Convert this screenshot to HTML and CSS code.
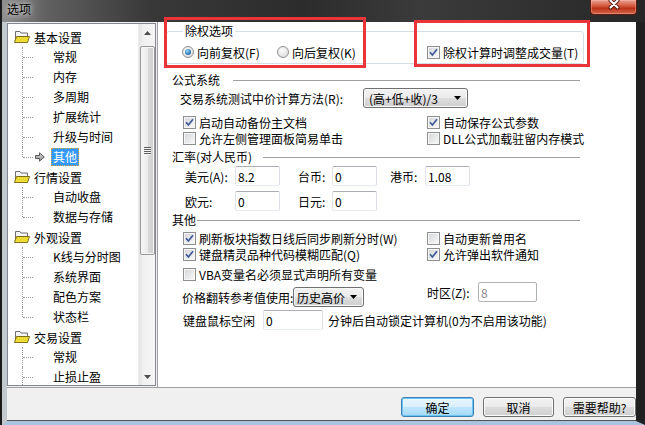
FILE: index.html
```html
<!DOCTYPE html>
<html lang="zh-CN">
<head>
    <meta charset="UTF-8">
    <meta name="viewport" content="width=device-width, initial-scale=1.0">
    <title>选项</title>
    <link rel="stylesheet" href="styles.css">
</head>
<body>
<div class="window">
    <div class="titlebar">
        <span class="title">选项</span>
        <span class="close-btn">
            <svg width="14" height="11" viewBox="0 0 14 11">
                <path d="M3.5 1.5 L10.5 8.5 M10.5 1.5 L3.5 8.5" stroke="#5a1a10" stroke-width="4" stroke-linecap="round"/>
                <path d="M3.5 1.5 L10.5 8.5 M10.5 1.5 L3.5 8.5" stroke="#fff" stroke-width="2" stroke-linecap="round"/>
            </svg>
        </span>
    </div>

    <div class="frame">
        <div class="client">
            <!-- left tree -->
            <div class="tree">
                <ul class="tree-list">
                    <li class="tree-node">
                        <div class="node-label">
                            <svg class="folder" width="16" height="14" viewBox="0 0 16 14">
                                <path d="M1.5 1.5 H6 L7 3 H13.5 V11.5 H1.5 Z" fill="#f4f4f4" stroke="#6f6f6f"/>
                                <path d="M0.5 12.5 L2.5 6.5 H15.5 L13.5 12.5 Z" fill="#f3e33a" stroke="#7d6d1a"/>
                                <path d="M3 8 H14 M2.5 10 H13.5" stroke="#d8c020" stroke-dasharray="1 1"/>
                            </svg>基本设置
                        </div>
                        <ul class="tree-children">
                            <li>常规</li>
                            <li>内存</li>
                            <li>多周期</li>
                            <li>扩展统计</li>
                            <li>升级与时间</li>
                            <li class="selected">
                                <svg class="arrow-icon" width="10" height="10" viewBox="0 0 10 10">
                                    <defs>
                                        <linearGradient id="arw" x1="0" y1="0" x2="0" y2="1">
                                            <stop offset="0" stop-color="#e0e0e0"/>
                                            <stop offset="1" stop-color="#8a8a8a"/>
                                        </linearGradient>
                                    </defs>
                                    <path d="M0.5 3.5 H4.5 V0.8 L9.3 5 L4.5 9.2 V6.5 H0.5 Z" fill="url(#arw)" stroke="#5a5a5a"/>
                                </svg><span class="sel-text">其他</span>
                            </li>
                        </ul>
                    </li>
                    <li class="tree-node">
                        <div class="node-label">
                            <svg class="folder" width="16" height="14" viewBox="0 0 16 14">
                                <path d="M1.5 1.5 H6 L7 3 H13.5 V11.5 H1.5 Z" fill="#f4f4f4" stroke="#6f6f6f"/>
                                <path d="M0.5 12.5 L2.5 6.5 H15.5 L13.5 12.5 Z" fill="#f3e33a" stroke="#7d6d1a"/>
                                <path d="M3 8 H14 M2.5 10 H13.5" stroke="#d8c020" stroke-dasharray="1 1"/>
                            </svg>行情设置
                        </div>
                        <ul class="tree-children">
                            <li>自动收盘</li>
                            <li>数据与存储</li>
                        </ul>
                    </li>
                    <li class="tree-node">
                        <div class="node-label">
                            <svg class="folder" width="16" height="14" viewBox="0 0 16 14">
                                <path d="M1.5 1.5 H6 L7 3 H13.5 V11.5 H1.5 Z" fill="#f4f4f4" stroke="#6f6f6f"/>
                                <path d="M0.5 12.5 L2.5 6.5 H15.5 L13.5 12.5 Z" fill="#f3e33a" stroke="#7d6d1a"/>
                                <path d="M3 8 H14 M2.5 10 H13.5" stroke="#d8c020" stroke-dasharray="1 1"/>
                            </svg>外观设置
                        </div>
                        <ul class="tree-children">
                            <li>K线与分时图</li>
                            <li>系统界面</li>
                            <li>配色方案</li>
                            <li>状态栏</li>
                        </ul>
                    </li>
                    <li class="tree-node">
                        <div class="node-label">
                            <svg class="folder" width="16" height="14" viewBox="0 0 16 14">
                                <path d="M1.5 1.5 H6 L7 3 H13.5 V11.5 H1.5 Z" fill="#f4f4f4" stroke="#6f6f6f"/>
                                <path d="M0.5 12.5 L2.5 6.5 H15.5 L13.5 12.5 Z" fill="#f3e33a" stroke="#7d6d1a"/>
                                <path d="M3 8 H14 M2.5 10 H13.5" stroke="#d8c020" stroke-dasharray="1 1"/>
                            </svg>交易设置
                        </div>
                        <ul class="tree-children more">
                            <li>常规</li>
                            <li>止损止盈</li>
                        </ul>
                    </li>
                </ul>
                <div class="scrollbar">
                    <div class="sb-btn">
                        <svg width="7" height="4" viewBox="0 0 7 4"><path d="M0 4 L3.5 0 L7 4 Z" fill="#4d4d4d"/></svg>
                    </div>
                    <div class="sb-thumb"><span class="grip"></span></div>
                    <div class="sb-space"></div>
                    <div class="sb-btn">
                        <svg width="7" height="4" viewBox="0 0 7 4"><path d="M0 0 L7 0 L3.5 4 Z" fill="#4d4d4d"/></svg>
                    </div>
                </div>
            </div>

            <!-- right settings panel -->
            <div class="panel">
                <fieldset class="group">
                    <legend>除权选项</legend>
                    <div class="group-row">
                        <label class="radio-item radio-first"><span class="radio checked"></span>向前复权(F)</label>
                        <label class="radio-item radio-second"><span class="radio"></span>向后复权(K)</label>
                        <label class="check-item"><span class="check checked">
                            <svg width="9" height="9" viewBox="0 0 9 9"><path d="M1 4.2 L3.4 7 L8 1.2" fill="none" stroke="#3f5a97" stroke-width="1.7"/></svg>
                        </span>除权计算时调整成交量(T)</label>
                    </div>
                </fieldset>

                <div class="section-title">
                    <span class="section-name name-formula">公式系统</span><span class="section-line"></span>
                </div>
                <div class="calc-row">
                    <span class="calc-label">交易系统测试中价计算方法(R):</span>
                    <span class="combo combo-calc">(高+低+收)/3<span class="combo-arrow"><svg width="7" height="4" viewBox="0 0 7 4"><path d="M0 0 L7 0 L3.5 4 Z" fill="#000"/></svg></span></span>
                </div>
                <div class="check-grid">
                    <label class="check-item"><span class="check checked">
                        <svg width="9" height="9" viewBox="0 0 9 9"><path d="M1 4.2 L3.4 7 L8 1.2" fill="none" stroke="#3f5a97" stroke-width="1.7"/></svg>
                    </span>启动自动备份主文档</label>
                    <label class="check-item"><span class="check checked">
                        <svg width="9" height="9" viewBox="0 0 9 9"><path d="M1 4.2 L3.4 7 L8 1.2" fill="none" stroke="#3f5a97" stroke-width="1.7"/></svg>
                    </span>自动保存公式参数</label>
                    <label class="check-item"><span class="check"></span>允许左侧管理面板简易单击</label>
                    <label class="check-item"><span class="check"></span>DLL公式加载驻留内存模式</label>
                </div>

                <div class="section-title">
                    <span class="section-name name-rate">汇率(对人民币)</span><span class="section-line"></span>
                </div>
                <div class="rate-grid">
                    <span class="rate-label">美元(A):</span>
                    <input class="textbox" type="text" value="8.2">
                    <span class="rate-label">台币:</span>
                    <input class="textbox" type="text" value="0">
                    <span class="rate-label">港币:</span>
                    <input class="textbox" type="text" value="1.08">
                    <span class="rate-label">欧元:</span>
                    <input class="textbox" type="text" value="0">
                    <span class="rate-label">日元:</span>
                    <input class="textbox" type="text" value="0">
                </div>

                <div class="section-title">
                    <span class="section-name name-other">其他</span><span class="section-line"></span>
                </div>
                <div class="check-grid other-grid">
                    <label class="check-item"><span class="check checked">
                        <svg width="9" height="9" viewBox="0 0 9 9"><path d="M1 4.2 L3.4 7 L8 1.2" fill="none" stroke="#3f5a97" stroke-width="1.7"/></svg>
                    </span>刷新板块指数日线后同步刷新分时(W)</label>
                    <label class="check-item"><span class="check"></span>自动更新曾用名</label>
                    <label class="check-item"><span class="check checked">
                        <svg width="9" height="9" viewBox="0 0 9 9"><path d="M1 4.2 L3.4 7 L8 1.2" fill="none" stroke="#3f5a97" stroke-width="1.7"/></svg>
                    </span>键盘精灵品种代码模糊匹配(Q)</label>
                    <label class="check-item"><span class="check checked">
                        <svg width="9" height="9" viewBox="0 0 9 9"><path d="M1 4.2 L3.4 7 L8 1.2" fill="none" stroke="#3f5a97" stroke-width="1.7"/></svg>
                    </span>允许弹出软件通知</label>
                    <label class="check-item"><span class="check"></span>VBA变量名必须显式声明所有变量</label>
                </div>

                <div class="price-row">
                    <div class="price-left">
                        <span class="price-label">价格翻转参考值使用:</span>
                        <span class="combo combo-price">历史高价<span class="combo-arrow"><svg width="7" height="4" viewBox="0 0 7 4"><path d="M0 0 L7 0 L3.5 4 Z" fill="#000"/></svg></span></span>
                    </div>
                    <div class="price-right">
                        <span class="zone-label">时区(Z):</span>
                        <input class="textbox zone-input" type="text" value="8" disabled>
                    </div>
                </div>

                <div class="idle-row">
                    <span class="idle-label">键盘鼠标空闲</span>
                    <input class="textbox idle-input" type="text" value="0">
                    <span class="idle-text">分钟后自动锁定计算机(0为不启用该功能)</span>
                </div>
            </div>
        </div>

        <div class="footer">
            <button class="btn btn-default">确定</button>
            <button class="btn btn-cancel">取消</button>
            <button class="btn">需要帮助?</button>
        </div>
    </div>

    <!-- red highlight marks drawn over the dialog -->
    <div class="mark mark-adjust"></div>
    <div class="mark mark-volume"></div>
</div>
</body>
</html>
```

FILE: styles.css
```css
* {
    box-sizing: border-box;
}
body {
    margin: 0;
    background: #111;
    font-family: "Noto Sans CJK SC", "Noto Sans", sans-serif;
    font-size: 12px;
    color: #000;
}
ul {
    list-style: none;
    margin: 0;
    padding: 0;
}
.window {
    position: relative;
    width: 645px;
    height: 425px;
    display: flex;
    flex-direction: column;
    overflow: hidden;
    border-left: 2px solid #1a1a1a;
    background: #2a2a2a;
}

/* title bar */
.titlebar {
    height: 22px;
    flex: none;
    display: flex;
    justify-content: space-between;
    align-items: flex-start;
    background: linear-gradient(to right, #8e8e8e 0, #606060 45px, #383838 150px, #2c2c2c 300px, #3b3b3b 420px, #272727 100%);
}
.title {
    margin: 2px 0 0 5px;
    line-height: 14px;
    text-shadow: 0 0 5px #e0e0e0, 0 0 9px #c8c8c8;
}
.close-btn {
    width: 47px;
    height: 15px;
    margin-right: 8px;
    display: flex;
    justify-content: center;
    align-items: flex-start;
    border: 1px solid #5a1a10;
    border-top: none;
    border-radius: 0 0 4px 4px;
    background: linear-gradient(#eaa392, #d65c42 40%, #bb3219 60%, #d4684a);
    box-shadow: inset 0 0 0 1px rgba(255, 200, 190, 0.35);
}
.close-btn svg {
    display: block;
    margin-top: -1px;
}

/* window body frame */
.frame {
    flex: 1;
    display: flex;
    flex-direction: column;
    border-style: solid;
    border-width: 0 9px 4px 5px;
    border-color: #202020 #202020 #a9c4de #c3c8cd;
    background: #f0f0f0;
}
.client {
    height: 365px;
    flex: none;
    display: flex;
}

/* tree */
.tree {
    width: 149px;
    height: 363px;
    margin-top: 1px;
    display: flex;
    border: 1px solid #828790;
    background: #fff;
}
.tree-list {
    flex: 1;
    padding-top: 3px;
    overflow: hidden;
}
.node-label {
    height: 20px;
    display: flex;
    align-items: center;
    padding-left: 6px;
}
.folder {
    display: block;
    margin-right: 4px;
}
.tree-children li {
    position: relative;
    height: 20px;
    line-height: 20px;
    padding-left: 45px;
    white-space: nowrap;
}
.tree-children li::before {
    content: "";
    position: absolute;
    left: 14px;
    top: 0;
    bottom: 0;
    border-left: 1px dotted #9a9a9a;
}
.tree-children li:last-child::before {
    bottom: 10px;
}
.tree-children.more li:last-child::before {
    bottom: 0;
}
.tree-children li::after {
    content: "";
    position: absolute;
    left: 15px;
    top: 10px;
    width: 10px;
    border-top: 1px dotted #9a9a9a;
}
.tree-children li.selected {
    display: flex;
    align-items: center;
    padding-left: 27px;
}
.arrow-icon {
    display: block;
}
.sel-text {
    margin-left: 6px;
    padding: 0 2px;
    line-height: 18px;
    background: #3399ff;
    color: #fff;
    outline: 1px dotted #d9a441;
    outline-offset: -1px;
}

/* scrollbar */
.scrollbar {
    width: 17px;
    flex: none;
    display: flex;
    flex-direction: column;
    align-items: center;
    border-left: 1px solid #ececec;
    background: linear-gradient(to right, #e4e4e4, #f1f1f1 4px, #f5f5f5);
}
.sb-btn {
    width: 100%;
    height: 17px;
    display: flex;
    align-items: center;
    justify-content: center;
}
.sb-btn svg {
    display: block;
}
.sb-thumb {
    width: 15px;
    height: 209px;
    margin-top: 5px;
    display: flex;
    align-items: center;
    justify-content: center;
    border: 1px solid #979797;
    border-radius: 2px;
    background: linear-gradient(to right, #f5f5f5, #ebebeb 50%, #dadada 51%, #cfcfcf);
    box-shadow: inset 0 0 0 1px #f8f8f8;
}
.grip {
    width: 7px;
    height: 8px;
    background: repeating-linear-gradient(#5f5f5f 0 1px, #f4f4f4 1px 2px);
}
.sb-space {
    flex: 1;
}

/* right panel */
.panel {
    flex: 1;
    margin-left: 1px;
    border-left: 1px solid #a0a0a0;
    background: #fff;
}
.group {
    width: 418px;
    margin: 2px 0 0 8px;
    padding: 6px 0 3px 15px;
    border: 1px solid #d5dfe5;
    border-radius: 3px;
}
.group legend {
    margin-left: 1px;
    padding: 0 2px;
    line-height: 14px;
}
.group-row {
    height: 16px;
    display: flex;
    align-items: center;
}
.radio-item,
.check-item {
    display: flex;
    align-items: center;
    white-space: nowrap;
}
.radio-first {
    width: 95px;
}
.radio-second {
    width: 150px;
}
.radio {
    width: 12px;
    height: 12px;
    margin-right: 3px;
    display: flex;
    align-items: center;
    justify-content: center;
    border: 1px solid #8e8f8f;
    border-radius: 50%;
    background: radial-gradient(circle at 40% 35%, #fbfbfb, #e6e6e6 60%, #cfcfcf);
}
.radio.checked::after {
    content: "";
    width: 6px;
    height: 6px;
    border-radius: 50%;
    background: radial-gradient(circle at 40% 35%, #9ad8f8, #2a78b8 60%, #1a4f86);
}
.check {
    width: 13px;
    height: 13px;
    margin-right: 3px;
    display: flex;
    align-items: center;
    justify-content: center;
    border: 1px solid #8e8f8f;
    background: linear-gradient(135deg, #d2d4d8, #f3f3f3 80%);
    box-shadow: inset 0 0 0 1px #f6f6f6;
}
.check svg {
    display: block;
}

.section-title {
    height: 14px;
    display: flex;
    align-items: center;
    margin: 9px 56px 0 14px;
    line-height: 14px;
}
.section-name {
    white-space: nowrap;
}
.name-formula {
    width: 61px;
}
.name-rate {
    width: 91px;
}
.name-other {
    width: 25px;
}
.section-line {
    flex: 1;
    height: 1px;
    background: #a0a0a0;
}

.calc-row {
    height: 20px;
    margin-top: 1px;
    padding-left: 22px;
    display: flex;
    align-items: center;
}
.calc-label {
    width: 183px;
    white-space: nowrap;
}
.combo {
    position: relative;
    height: 20px;
    display: flex;
    align-items: center;
    padding-left: 5px;
    border: 1px solid #707070;
    border-radius: 3px;
    background: linear-gradient(#f2f2f2, #ebebeb 50%, #dddddd 51%, #cfcfcf);
    box-shadow: inset 0 0 0 1px #fafafa;
    white-space: nowrap;
}
.combo-calc {
    width: 105px;
}
.combo-price {
    width: 71px;
    padding-left: 3px;
}
.combo-arrow {
    margin-left: auto;
    margin-right: 6px;
}
.combo-arrow svg {
    display: block;
}

.check-grid {
    display: grid;
    grid-template-columns: 244px auto;
    grid-auto-rows: 16px;
    align-items: center;
    margin-top: 6px;
    padding-left: 25px;
}
.other-grid {
    grid-template-rows: 16px 16px 20px;
    align-items: end;
    margin-top: 3px;
}
.other-grid .check-item {
    height: 16px;
}
.check-grid + .section-title {
    margin-top: 4px;
}

.rate-grid {
    display: grid;
    grid-template-columns: 50px 45px 52px 45px 48px 45px;
    grid-auto-rows: 20px;
    row-gap: 5px;
    align-items: center;
    margin-top: 2px;
    padding-left: 27px;
}
.rate-grid .rate-label:nth-of-type(2),
.rate-grid .rate-label:nth-of-type(5) {
    padding-left: 18px;
}
.rate-grid .rate-label:nth-of-type(3) {
    padding-left: 13px;
}
.rate-grid + .section-title {
    margin-top: 2px;
}
.textbox {
    width: 45px;
    height: 20px;
    margin: 0;
    padding: 0 2px;
    font: inherit;
    color: #000;
    border: 1px solid;
    border-color: #abadb3 #dbdfe6 #e3e9ef #e2e3ea;
    border-radius: 2px;
    background: #fff;
    outline: none;
}

.price-row {
    height: 25px;
    display: flex;
    align-items: flex-start;
    padding-left: 24px;
}
.price-left {
    display: flex;
    align-items: center;
    margin-top: 5px;
}
.price-label {
    width: 111px;
    white-space: nowrap;
}
.price-right {
    display: flex;
    align-items: center;
    margin-left: 63px;
}
.zone-label {
    width: 51px;
}
.zone-input {
    width: 59px;
    color: #8d8d8d;
    border-color: #adb2b5;
    background: #fff;
}

.idle-row {
    height: 20px;
    margin-top: 3px;
    padding-left: 25px;
    display: flex;
    align-items: center;
}
.idle-label {
    width: 80px;
}
.idle-input {
    width: 60px;
}
.idle-text {
    margin-left: 5px;
    white-space: nowrap;
}

/* footer buttons */
.footer {
    flex: 1;
    display: flex;
    justify-content: flex-end;
    align-items: flex-start;
    gap: 9px;
    padding: 9px 0 0 0;
    border-top: 1px solid #a0a0a0;
    border-bottom: 1px solid #555;
}
.btn {
    width: 73px;
    height: 20px;
    padding: 0;
    font: inherit;
    color: #000;
    border: 1px solid #707070;
    border-radius: 3px;
    background: linear-gradient(#f2f2f2, #ebebeb 50%, #dddddd 51%, #cfcfcf);
    box-shadow: inset 0 0 0 1px #fcfcfc;
}
.btn-cancel {
    width: 71px;
}
.btn-default {
    border-color: #3c7fb1;
    background: linear-gradient(#eaf6fd, #d9f0fc 50%, #bee6fd 51%, #a7d9f5);
    box-shadow: inset 0 0 0 1px #6cc6f4;
}

/* red annotation boxes */
.mark {
    position: absolute;
    border: 3px solid #e9353a;
}
.mark-adjust {
    left: 162px;
    top: 17px;
    width: 202px;
    height: 51px;
}
.mark-volume {
    left: 412px;
    top: 20px;
    width: 176px;
    height: 47px;
}
```
